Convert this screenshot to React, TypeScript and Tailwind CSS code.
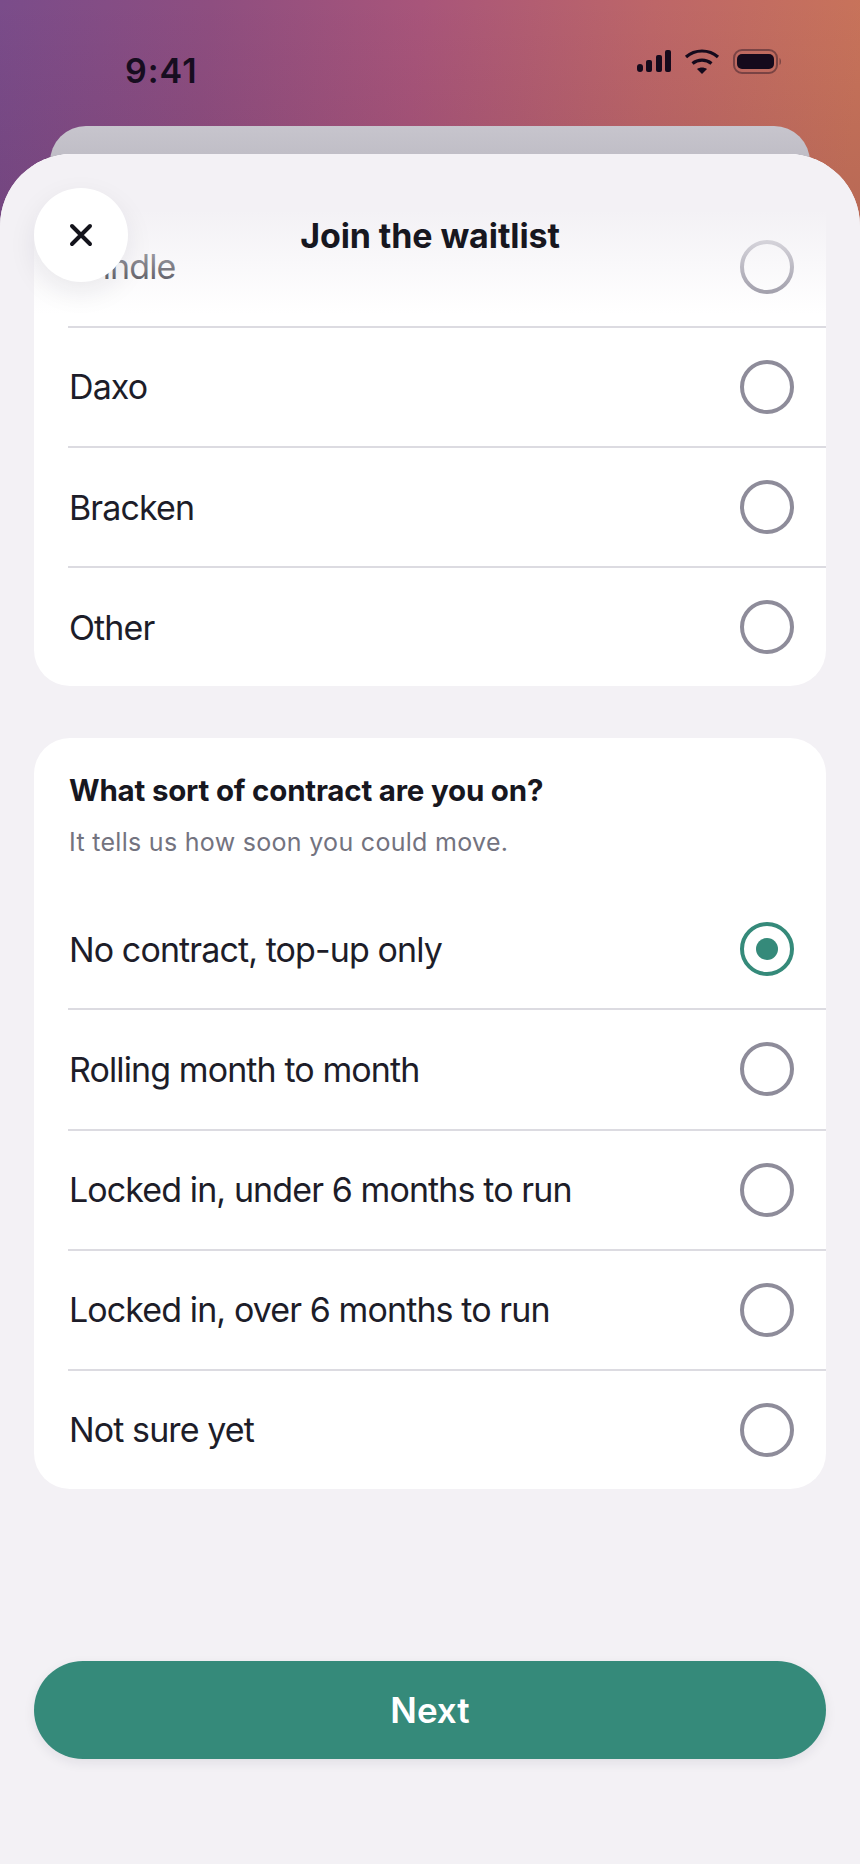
import React from "react";

function Radio({ checked }: { checked?: boolean }) {
  return (
    <span
      className={
        checked
          ? "flex h-[54px] w-[54px] shrink-0 items-center justify-center rounded-full border-[4px] border-[#358a7a]"
          : "flex h-[54px] w-[54px] shrink-0 items-center justify-center rounded-full border-[4px] border-[#8e8c9a]"
      }
    >
      {checked ? <span className="h-[22px] w-[22px] rounded-full bg-[#358a7a]" /> : null}
    </span>
  );
}

function Row({ label, checked, last }: { label: string; checked?: boolean; last?: boolean }) {
  return (
    <div
      className={
        last
          ? "flex h-[118px] items-center justify-between pr-[32px]"
          : "flex h-[120.2px] items-center justify-between border-b-2 border-[#dcdbe1] pr-[32px]"
      }
    >
      <span className="pl-[1px] pt-[1px] text-[34px] leading-[44px] tracking-[-0.9px] text-[#1d1d29]">{label}</span>
      <Radio checked={checked} />
    </div>
  );
}

function StatusIcons() {
  return (
    <div className="flex items-center gap-[13px]">
      <svg width="34" height="23" viewBox="0 0 34 23" fill="#150a1c">
        <rect x="0" y="14" width="6" height="8" rx="3" />
        <rect x="9" y="10" width="6" height="12" rx="2" />
        <rect x="19" y="5" width="6" height="17" rx="2" />
        <rect x="28" y="0" width="6" height="22" rx="2" />
      </svg>
      <svg width="36" height="27" viewBox="0 0 36 27" fill="none" stroke="#150a1c" strokeWidth="3.2">
        <path d="M2 9 C11 1 25 1 34 9" />
        <path d="M8.5 15.5 C14 11 22 11 27.5 15.5" />
        <path d="M13 21 L18 26 L23 21 C20 19 16 19 13 21 Z" fill="#150a1c" stroke="none" />
      </svg>
      <svg width="50" height="25" viewBox="0 0 50 25" fill="none">
        <rect x="1" y="1" width="43" height="23" rx="8" stroke="#150a1c" strokeOpacity="0.4" strokeWidth="2" />
        <rect x="4" y="5" width="37" height="15" rx="5" fill="#150a1c" />
        <path d="M46.5 9 C48.5 10 48.5 15 46.5 16 Z" fill="#150a1c" fillOpacity="0.4" />
      </svg>
    </div>
  );
}

export default function App() {
  return (
    <div className="flex h-[1864px] w-[860px] flex-col overflow-hidden bg-[linear-gradient(180deg,rgba(40,10,40,0)_0px,rgba(40,10,40,0.1)_230px),linear-gradient(96deg,#7a4c8a_0%,#8e4e80_20%,#a8557a_40%,#bd6668_62%,#c8735a_82%)] font-['Inter',sans-serif]">
      <div className="flex h-[126px] shrink-0 items-start justify-between pl-[125px] pr-[77px] pt-[48px]">
        <span className="text-[34px] font-semibold leading-[46px] tracking-[1px] text-[#170d20]">9:41</span>
        <StatusIcons />
      </div>
      <div className="mx-[50px] h-[60px] shrink-0 rounded-t-[36px] bg-[linear-gradient(180deg,#c7c5cd,#b8b6bf)]" />
      <div className="relative -mt-[32px] flex min-h-0 flex-1 flex-col overflow-hidden rounded-t-[72px] bg-[#f3f1f5] px-[34px]">
        <div className="pointer-events-none absolute inset-x-0 top-0 z-10 h-[160px] bg-[linear-gradient(180deg,#f3f1f5_0%,#f3f1f5_35%,rgba(243,241,245,0)_100%)]" />
        <div className="absolute left-[34px] top-[34px] z-20 flex h-[94px] w-[94px] items-center justify-center rounded-full bg-white shadow-[0_10px_28px_rgba(30,25,45,0.08)]">
          <svg width="24" height="24" viewBox="0 0 24 24" fill="none" stroke="#14141c" strokeWidth="4" strokeLinecap="round">
            <path d="M3 3 L21 21 M21 3 L3 21" />
          </svg>
        </div>
        <div className="absolute inset-x-0 top-[60px] z-20 text-center text-[34px] font-bold leading-[44px] tracking-[-0.1px] text-[#17171f]">
          Join the waitlist
        </div>

        <div className="-mt-[60px] shrink-0 rounded-[36px] bg-white pl-[34px] pt-[113.6px]">
          <Row label="Brindle" />
          <Row label="Daxo" />
          <Row label="Bracken" />
          <Row label="Other" last />
        </div>

        <div className="mt-[52px] shrink-0 rounded-[36px] bg-white pl-[34px]">
          <div className="pt-[33px]">
            <div className="pl-[1px] text-[29.5px] font-bold leading-[38px] tracking-[-0.2px] text-[#17171f]">
              What sort of contract are you on?
            </div>
            <div className="mt-[15px] pl-[1px] text-[25px] leading-[36px] tracking-[0.3px] text-[#73737f]">
              It tells us how soon you could move.
            </div>
          </div>
          <div className="mt-[30px]">
            <Row label="No contract, top-up only" checked />
            <Row label="Rolling month to month" />
            <Row label="Locked in, under 6 months to run" />
            <Row label="Locked in, over 6 months to run" />
            <Row label="Not sure yet" last />
          </div>
        </div>

        <button className="mt-[172px] flex h-[98px] shrink-0 items-center justify-center rounded-full bg-[#358a7a] text-[35px] font-semibold text-white shadow-[0_4px_12px_rgba(30,25,45,0.08)]">
          Next
        </button>
      </div>
    </div>
  );
}
